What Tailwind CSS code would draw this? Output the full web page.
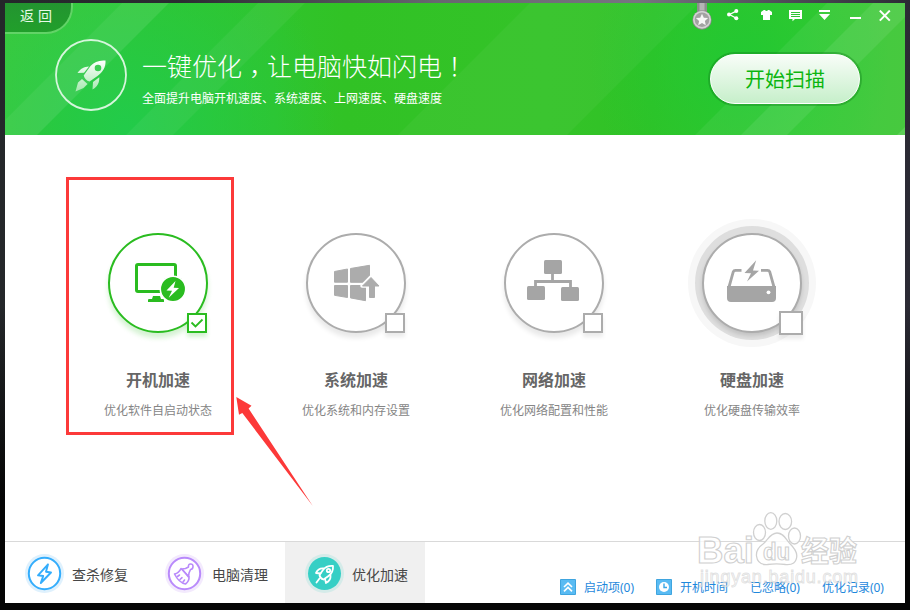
<!DOCTYPE html>
<html lang="zh-CN">
<head>
    <meta charset="UTF-8">
    <meta name="viewport" content="width=device-width, initial-scale=1.0">
    <title>优化加速</title>
    <script src="https://cdn.jsdelivr.net/npm/@tailwindcss/browser@4"></script>
</head>
<body class="w-[910px] h-[610px] overflow-hidden bg-[#050505] font-['Noto_Sans','Noto_Sans_CJK_SC',sans-serif]">
    <div class="relative w-[910px] h-[610px] pl-[5px] pt-[3px] bg-[linear-gradient(180deg,transparent_50%,#050505_82%),linear-gradient(90deg,#24272a,#2b2c31_20%,#686670_48%,#777480_70%,#33323c_97%,#2b2a34)]">
        <div class="w-[900px] h-[600px] bg-white flex flex-col">

            <!-- 顶部 -->
            <header class="relative h-[132px] shrink-0 overflow-hidden bg-[radial-gradient(circle_at_120px_125px,#22cb4a_0,#22cb4a00_210px),radial-gradient(circle_at_735px_60px,#22c832_0,#22c83200_150px),linear-gradient(90deg,#34c632_0%,#30c42c_30%,#31c225_38%,#34c328_60%,#30c226_72%,#35c930_88%,#3cc634_100%)]">
                <svg class="absolute inset-0" width="900" height="132" viewBox="0 0 900 132">
                    <path d="M0 0H117L0 117z" fill="#fff" fill-opacity=".04"/>
                    <path d="M117 0H164L32 132H0V117z" fill="#fff" fill-opacity=".09"/>
                    <path d="M253 0H300L168 132H121z" fill="#fff" fill-opacity=".05"/>
                    <path d="M525 0H694L562 132H393z" fill="#fff" fill-opacity=".04"/>
                    <path d="M822 0H900V132H690z" fill="#fff" fill-opacity=".06"/>
                    <path d="M868 0H900V14L782 132H736z" fill="#fff" fill-opacity=".08"/>
                    <path d="M900 124V132H892z" fill="#fff" fill-opacity=".12"/>
                </svg>

                <button class="absolute left-0 top-0 w-[68px] h-[31px] pl-[15px] pb-[3px] text-left text-sm leading-none tracking-[4px] text-[#e8fbe8] rounded-br-[27px] border-r-2 border-b-2 border-[#62d367] bg-linear-to-b from-[#239430] to-[#219f2b]">返回</button>

                <!-- 窗口按钮 -->
                <div class="absolute left-[687px] top-0 flex items-start">
                    <svg width="20" height="28" viewBox="0 0 20 28">
                        <path d="M5 0h10v9H5z" fill="#8c8f8c"/>
                        <path d="M7.500 0h5v9h-5z" fill="#b5b5b5"/>
                        <circle cx="10" cy="17" r="9.700" fill="#898989"/>
                        <circle cx="10" cy="16.700" r="9" fill="#d3d3d3"/>
                        <circle cx="10" cy="16.700" r="7.300" fill="#a2a2a2"/>
                        <path d="M10 10.700l1.800 4 4.300.4-3.200 2.900.9 4.200-3.800-2.200-3.800 2.200.9-4.200-3.200-2.900 4.300-.4z" fill="#f7f7f7"/>
                    </svg>
                    <svg class="ml-[15px] mt-1.5" width="12" height="12" viewBox="0 0 12 12" fill="#fff">
                        <path d="M9.300 2.200L2.500 5.500l6.800 3.800" fill="none" stroke="#fff" stroke-width="1.300"/>
                        <circle cx="9.300" cy="2.100" r="2"/><circle cx="2" cy="5.500" r="2"/><circle cx="9.300" cy="9.200" r="2"/>
                    </svg>
                    <svg class="ml-[22px] mt-[7px]" width="12" height="11" viewBox="0 0 12 11">
                        <path d="M2.800 0H4c.6 1.200 2.400 1.200 3 0h1.200L11 2v3H9v5H2V5H0V2z" fill="#fff"/>
                    </svg>
                    <svg class="ml-4 mt-[7px]" width="14" height="12" viewBox="0 0 14 12">
                        <path d="M0 0h13v9H6l-2.500 2.200V9H0z" fill="#fff"/>
                        <path d="M2 2.500h9M2 4.500h9M2 6.500h9" stroke="#2ec436"/>
                    </svg>
                    <svg class="ml-4 mt-[7px]" width="12" height="11" viewBox="0 0 12 11" fill="#fff">
                        <path d="M0 0h11v2H0zM0 4h11L5.500 10z"/>
                    </svg>
                    <svg class="ml-[19px] mt-[14px]" width="12" height="2" viewBox="0 0 12 2"><path d="M0 0h11v2H0z" fill="#fff"/></svg>
                    <svg class="ml-[17px] mt-[7px]" width="12" height="12" viewBox="0 0 12 12"><path d="M.8.600l10 10M10.800.600l-10 10" stroke="#fff" stroke-width="2"/></svg>
                </div>

                <div class="relative flex items-start pl-[50px] pt-9">
                    <svg class="shrink-0" width="72" height="72" viewBox="0 0 72 72">
                        <defs>
                            <linearGradient id="rocket" x1="0" y1="0" x2="0" y2="1">
                                <stop offset="0" stop-color="#fff"/><stop offset="1" stop-color="#a5e8ae"/>
                            </linearGradient>
                        </defs>
                        <circle cx="36" cy="36" r="35" fill="#fff" fill-opacity=".02" stroke="#d6f6dc" stroke-width="1.800"/>
                        <path fill="url(#rocket)" fill-rule="evenodd" d="M50.500 21.500c-6.500-.6-11.500 1.500-15 5.500l-6.800 9.500c.6 3 2.800 5.200 5.800 6l8-5.500c5-4 8.500-8.500 8-15.500zM43 25.700a3.300 3.300 0 1 1 0 6.600 3.300 3.300 0 0 1 0-6.600zM34 27.500c-5 .3-8.500 2-11.500 6.500l6.500-.3zM44.300 38.200c.2 5.500-2 9.800-6.800 12.300l.5-7.500zM27 40l-4 3.500-2.500 9 8-3.500 4-4z"/>
                    </svg>
                    <div class="ml-[15px] text-white">
                        <h1 class="mt-2 text-[25px] leading-9 font-light whitespace-nowrap">一键优化<span lang="zh-TW" class="relative top-[7px] font-['Noto_Sans_CJK_TC']">，</span>让电脑快如闪电<span lang="zh-TW" class="font-['Noto_Sans_CJK_TC']">！</span></h1>
                        <p class="mt-1.5 text-xs leading-[18px] whitespace-nowrap">全面提升电脑开机速度、系统速度、上网速度、硬盘速度</p>
                    </div>
                    <button class="ml-auto mr-[45px] mt-[15px] w-[150px] h-[50px] pt-px rounded-full border border-white bg-linear-to-b from-[#f8fdf8] to-[#c6efca] shadow-[0_0_0_2px_rgba(20,130,30,0.4)] text-xl leading-none text-[#0bb50f]">开始扫描</button>
                </div>
            </header>

            <!-- 加速项目 -->
            <main class="h-[406px] shrink-0 pl-[54px] pt-[98px] grid grid-cols-[repeat(4,198px)]">
                <div class="flex flex-col items-center">
                    <div class="relative w-[100px] h-[100px] rounded-full border-2 border-[#2abc20] bg-white shadow-[0_5px_5px_rgba(42,188,32,0.2)]">
                        <svg class="absolute -left-0.5 -top-0.5" width="100" height="100" viewBox="0 0 100 100">
                            <rect x="28.500" y="31.500" width="39" height="27" rx="1.500" fill="none" stroke="#2abc20" stroke-width="3"/>
                            <path d="M45 63h7l1 3h2q1 0 1 1.300v1.700h-16v-1.700q0-1.300 1-1.300H44z" fill="#2abc20"/>
                            <circle cx="65" cy="56" r="12.700" fill="#2abc20" stroke="#fff" stroke-width="1.500"/>
                            <path d="M67.500 48L58.500 57.500l5.500.2-3.300 7L71 55l-5.300-.2z" fill="#fff"/>
                        </svg>
                        <span class="absolute left-[77px] top-[78px] w-5 h-5 border-2 border-[#2abc20] bg-white shadow-[0_4px_4px_rgba(42,188,32,0.2)]">
                            <svg width="16" height="16" viewBox="0 0 16 16"><path d="M2.500 7.500l4 4L13.500 4.500" fill="none" stroke="#2abc20" stroke-width="1.800"/></svg>
                        </span>
                    </div>
                    <h2 class="mt-[35px] text-base leading-6 font-bold text-[#666]">开机加速</h2>
                    <p class="mt-[10px] text-xs leading-[18px] text-[#858585]">优化软件自启动状态</p>
                </div>

                <div class="flex flex-col items-center">
                    <div class="relative w-[100px] h-[100px] rounded-full border-2 border-[#acacac] bg-white shadow-[0_5px_5px_rgba(0,0,0,0.09)]">
                        <svg class="absolute -left-0.5 -top-0.5" width="100" height="100" viewBox="0 0 100 100" fill="#acacac" stroke="#acacac" stroke-linejoin="round">
                            <path d="M28.500 38.500l13-2.500v13.200h-13zM44.500 35.500l19-3.200v17h-19zM28.500 52.500h13v12l-13-2.200zM44.500 52.500h15v15.200l-15-2.800z"/>
                            <path d="M64.800 44L73.500 53h-5v11.500h-6V53h-6.500z" stroke="#fff" stroke-width="3.500"/>
                            <path d="M65 44.500L73 53h-4.500v11.500h-5V53h-7z"/>
                        </svg>
                        <span class="absolute left-[77px] top-[78px] w-5 h-5 border-2 border-[#acacac] bg-white shadow-[0_4px_4px_rgba(0,0,0,0.08)]"></span>
                    </div>
                    <h2 class="mt-[35px] text-base leading-6 font-bold text-[#666]">系统加速</h2>
                    <p class="mt-[10px] text-xs leading-[18px] text-[#858585]">优化系统和内存设置</p>
                </div>

                <div class="flex flex-col items-center">
                    <div class="relative w-[100px] h-[100px] rounded-full border-2 border-[#acacac] bg-white shadow-[0_5px_5px_rgba(0,0,0,0.09)]">
                        <svg class="absolute -left-0.5 -top-0.5" width="100" height="100" viewBox="0 0 100 100" fill="#a5a5a5">
                            <rect x="40" y="27" width="18" height="14" rx="1.500"/>
                            <rect x="23" y="53" width="18" height="14" rx="1.500"/>
                            <rect x="57" y="54" width="18" height="14" rx="1.500"/>
                            <path d="M48.500 40v8.500M31.500 54v-5.500h35V55" fill="none" stroke="#a5a5a5" stroke-width="2.800"/>
                        </svg>
                        <span class="absolute left-[77px] top-[78px] w-5 h-5 border-2 border-[#acacac] bg-white shadow-[0_4px_4px_rgba(0,0,0,0.08)]"></span>
                    </div>
                    <h2 class="mt-[35px] text-base leading-6 font-bold text-[#666]">网络加速</h2>
                    <p class="mt-[10px] text-xs leading-[18px] text-[#858585]">优化网络配置和性能</p>
                </div>

                <div class="flex flex-col items-center">
                    <div class="relative w-[100px] h-[100px] rounded-full border-2 border-[#acacac] bg-white shadow-[0_3px_4px_rgba(0,0,0,0.13),0_0_0_7px_#dedede,0_0_0_14px_#f7f7f7]">
                        <svg class="absolute -left-0.5 -top-0.5" width="100" height="100" viewBox="0 0 100 100" fill="#a5a5a5">
                            <path d="M25 53h49v12q0 4-4 4H29q-4 0-4-4z"/>
                            <path d="M27 54l4.300-15.300q.5-1.400 2.200-1.400H39.500M59 37.300h6.500q1.700 0 2.200 1.400L72 54" fill="none" stroke="#a5a5a5" stroke-width="2.800"/>
                            <path d="M54.200 27.200L42.500 40l6.500.3-4 8.300L57 37.800l-6-.3z"/>
                            <circle cx="66.500" cy="59.300" r="1.900" fill="#fff"/>
                        </svg>
                        <span class="absolute left-[75px] top-[76px] w-6 h-6 border-2 border-[#acacac] bg-white shadow-[0_4px_4px_rgba(0,0,0,0.08)]"></span>
                    </div>
                    <h2 class="mt-[35px] text-base leading-6 font-bold text-[#666]">硬盘加速</h2>
                    <p class="mt-[10px] text-xs leading-[18px] text-[#858585]">优化硬盘传输效率</p>
                </div>
            </main>

            <!-- 底部导航 -->
            <footer class="h-[62px] shrink-0 flex border-t border-[#d9d9d9]">
                <a class="w-[140px] pl-5 pt-px flex items-center gap-2 text-sm text-[#474747]">
                    <svg width="39" height="39" viewBox="0 0 39 39">
                        <circle cx="19.500" cy="19.500" r="19.500" fill="#dff1fd"/>
                        <circle cx="19.500" cy="19.500" r="15.700" fill="#fff" stroke="#34adfc" stroke-width="2"/>
                        <path d="M23 10.300L13 21.300l5.200.7-2.400 7L26 18.500l-5-.8z" fill="none" stroke="#34adfc" stroke-width="1.900" stroke-linejoin="round"/>
                    </svg>
                    <span class="pt-[3px]">查杀修复</span>
                </a>
                <a class="w-[140px] pl-5 pt-px flex items-center gap-2 text-sm text-[#474747]">
                    <svg width="39" height="39" viewBox="0 0 39 39">
                        <circle cx="19.500" cy="19.500" r="19.500" fill="#f3eafd"/>
                        <circle cx="19.500" cy="19.500" r="15.700" fill="#fff" stroke="#b98afb" stroke-width="2"/>
                        <g fill="none" stroke="#b98afb" stroke-width="1.600" stroke-linejoin="round" stroke-linecap="round">
                            <path d="M17 15l3.500-.5 3-1.500q-.5-2.800 2-3t2.500 2.500-2.500 3l-1.500 3.500-.5 4z"/>
                            <path d="M16 14.500l8 8.200q.5 4.300-3.500 7.300-6.500-1.200-11-10 4.500-1 6.500-5.500z"/>
                            <path d="M12.500 22.500l2-1.500M15 25.500l2-1.800M18 28l1.500-2"/>
                        </g>
                    </svg>
                    <span class="pt-[3px]">电脑清理</span>
                </a>
                <a class="w-[140px] pl-5 pt-px flex items-center gap-2 text-sm text-[#474747] bg-[#f0f0f0]">
                    <svg width="39" height="39" viewBox="0 0 39 39">
                        <circle cx="19.500" cy="19.500" r="19.500" fill="#d5ebe9"/>
                        <circle cx="19.500" cy="19.500" r="16.500" fill="#36cfc5"/>
                        <g fill="none" stroke="#fff" stroke-width="1.800" stroke-linejoin="round" stroke-linecap="round">
                            <path d="M28 12q-6.500-.5-10 4l-3.500 5q.5 3.500 4 4.500l5-3.500q5-3.500 4.500-10z"/>
                            <path d="M18.500 14.500q-5-.5-7.500 4.500l4.500.5M25.500 21.500q.5 5-4.500 7.500l-1-4M14.500 24.500l-3 4"/>
                            <circle cx="23.500" cy="16.500" r="1.700"/>
                        </g>
                    </svg>
                    <span class="pt-[3px]">优化加速</span>
                </a>
                <div class="flex-1 flex items-center justify-between pl-[135px] pr-[21px] pt-[29px] text-xs text-[#1e88dc] whitespace-nowrap">
                    <a class="flex items-center gap-2">
                        <svg width="16" height="16" viewBox="0 0 16 16">
                            <path d="M.5.5h15v15H.5z" fill="#59bbf3" stroke="#3fa5df"/>
                            <path d="M4 8l4-3.800L12 8M4 12.300l4-3.800 4 3.800" fill="none" stroke="#fff" stroke-width="1.700"/>
                        </svg>
                        <span class="pt-0.5">启动项(0)</span>
                    </a>
                    <a class="flex items-center gap-2">
                        <svg width="16" height="16" viewBox="0 0 16 16">
                            <path d="M.5.5h15v15H.5z" fill="#59bbf3" stroke="#3fa5df"/>
                            <circle cx="8" cy="8" r="5" fill="#fff"/>
                            <path d="M8 4.500V8.500h3" fill="none" stroke="#3aa6e6" stroke-width="1.400"/>
                        </svg>
                        <span class="pt-0.5">开机时间</span>
                    </a>
                    <a class="pt-0.5">已忽略(0)</a>
                    <a class="pt-0.5">优化记录(0)</a>
                </div>
            </footer>
        </div>

        <!-- 标注和水印 -->
        <div class="absolute left-[66px] top-[177px] w-[168px] h-[258px] border-3 border-[#fc3939]"></div>
        <svg class="absolute inset-0" width="910" height="610" viewBox="0 0 910 610">
            <path d="M236.300 397L251.500 405.800 248.600 408.500 312.800 506 242.300 413 239 414.800z" fill="#fc3939"/>
            <g fill="#fff" fill-opacity=".8" stroke="#d0d0d0" stroke-width="1.300">
                <ellipse cx="759.500" cy="532.500" rx="6" ry="8"/>
                <ellipse cx="770.800" cy="521" rx="6" ry="8.300"/>
                <ellipse cx="785.300" cy="521.500" rx="6.300" ry="8"/>
                <ellipse cx="794.500" cy="536" rx="6" ry="8"/>
                <path d="M777 533c-7 0-9 7-14 11-5 3.500-7 7-6.500 12 .8 6 5 9 11 8.500 6-.8 12-.8 18 0 7 .7 11-2 11.300-8.500.2-4.500-3-8.500-7-12.500-4-4-6-10.500-12.800-10.500z"/>
                <g class="font-['Liberation_Sans','Noto_Sans_CJK_SC',sans-serif] font-bold" stroke-width="1.100">
                    <text x="697" y="563" font-size="37" textLength="57" lengthAdjust="spacingAndGlyphs">Bai</text>
                    <text x="763" y="560" font-size="23" textLength="27" lengthAdjust="spacingAndGlyphs">du</text>
                    <text x="801" y="562" font-size="29" textLength="56" lengthAdjust="spacingAndGlyphs">经验</text>
                </g>
                <text x="700" y="583" font-size="18" textLength="158" fill-opacity=".6" stroke="#aaa" stroke-opacity=".35" stroke-width="1" class="font-['Liberation_Sans',sans-serif]">jingyan.baidu.com</text>
            </g>
        </svg>
    </div>
</body>
</html>
